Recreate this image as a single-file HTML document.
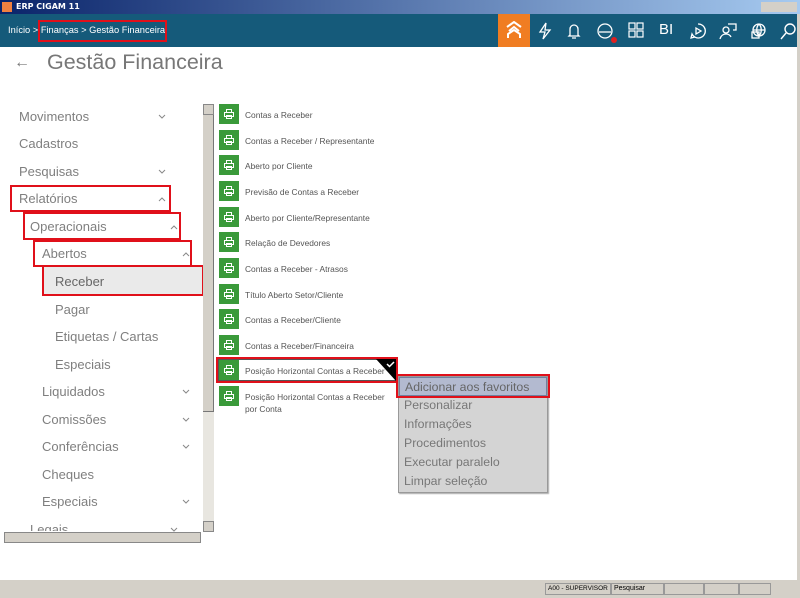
<!DOCTYPE html>
<html><head><meta charset="utf-8"><style>
*{margin:0;padding:0;box-sizing:border-box}
body{width:800px;height:598px;overflow:hidden;background:#d4d0c8;font-family:"Liberation Sans",sans-serif;position:relative}
.abs{position:absolute}
.title{left:0;top:0;width:800px;height:14px;background:linear-gradient(90deg,#0a246a,#a6caf0);color:#fff;font:bold 8px "DejaVu Sans",sans-serif;line-height:14px;padding-left:16px}
.top{left:0;top:14px;width:797px;height:33px;background:#155a7a}
.content{left:0;top:47px;width:797px;height:533px;background:#fff}
.mi{position:absolute;line-height:16px;color:#7f7f7f;font-size:13px;white-space:nowrap}
.chev{position:absolute;width:8px;height:5px}
.red{position:absolute;border:2px solid #e0101a}
.row{position:absolute;left:219px;height:22px}
.ic{position:absolute;left:0;top:0;width:20px;height:20px;background:#3a9a3a}
.ic svg{position:absolute;left:5px;top:5px}
.rt{position:absolute;left:26px;top:5px;font-size:8.4px;color:#555;white-space:nowrap;line-height:12px}
.cm div{height:19px;line-height:19px;padding-left:5px;font-size:12.3px;color:#777}
.ti{position:absolute;top:8px}
</style></head><body>
<div class="abs title"><span class="abs" style="left:2px;top:2px;width:10px;height:10px;background:#f08040"></span>ERP CIGAM 11
<span class="abs" style="left:761px;top:2px;width:36px;height:10px;background:#d4d0c8"></span></div>
<div class="abs top">
<div class="abs" style="left:8px;top:11px;color:#fff;font-size:9.3px;white-space:nowrap">Início &gt; Finanças &gt; Gestão Financeira</div>
<div class="abs" style="left:38px;top:6px;width:129px;height:22px;border:2px solid #e0101a"></div>
<div class="abs" style="left:498px;top:0;width:32px;height:33px;background:#f07d22">
<svg class="abs" style="left:7px;top:7px" width="18" height="18" viewBox="0 0 18 18" fill="none" stroke="#fff" stroke-width="2"><path d="M2 6l7-5 7 5M4 10l5-4 5 4M3 17v-4l6-4 6 4v4"/></svg></div>
<svg class="ti" style="left:537px" width="16" height="18" viewBox="0 0 16 18" fill="none" stroke="#fff" stroke-width="1.3"><path d="M9 1L3 10h5l-2 7 7-9H8z"/></svg>
<svg class="ti" style="left:567px" width="14" height="18" viewBox="0 0 14 18" fill="none" stroke="#fff" stroke-width="1.3"><path d="M3 13V7a4 4 0 018 0v6l1 1H2zM5 16h4"/></svg>
<svg class="ti" style="left:596px" width="18" height="18" viewBox="0 0 18 18" fill="none" stroke="#fff" stroke-width="1.3"><circle cx="9" cy="9" r="7"/><path d="M3 10h12"/></svg>
<span class="abs" style="left:611px;top:23px;width:6px;height:6px;border-radius:3px;background:#e02020"></span>
<svg class="ti" style="left:628px" width="16" height="16" viewBox="0 0 16 16" fill="none" stroke="#fff" stroke-width="1.2"><rect x="1" y="1" width="6" height="6"/><rect x="9" y="1" width="6" height="6"/><rect x="1" y="9" width="6" height="6"/><rect x="9" y="9" width="6" height="6"/></svg>
<div class="abs" style="left:659px;top:7px;color:#fff;font-size:15px">BI</div>
<svg class="ti" style="left:689px" width="18" height="18" viewBox="0 0 18 18" fill="none" stroke="#fff" stroke-width="1.3"><path d="M9 2a7 7 0 11-6 10l-1 4 4-1"/><path d="M7 6l5 3-5 3z"/></svg>
<svg class="ti" style="left:719px" width="18" height="18" viewBox="0 0 18 18" fill="none" stroke="#fff" stroke-width="1.3"><circle cx="7" cy="8" r="3"/><path d="M1 17c1-4 4-5 6-5s4 1 5 3M9 2h8v6h-3"/></svg>
<svg class="ti" style="left:750px" width="18" height="18" viewBox="0 0 18 18" fill="none" stroke="#fff" stroke-width="1.3"><circle cx="9" cy="8" r="6"/><path d="M3 8h12M9 2c-3 3-3 9 0 12M9 2c3 3 3 9 0 12"/><rect x="2" y="10" width="7" height="6"/></svg>
<svg class="ti" style="left:780px" width="17" height="18" viewBox="0 0 17 18" fill="none" stroke="#fff" stroke-width="1.4"><circle cx="10" cy="7" r="5"/><path d="M6 11l-5 6"/></svg>
</div>
<div class="abs content">
<div class="abs" style="left:14px;top:7px;font-size:16px;color:#777">←</div>
<div class="abs" style="left:47px;top:3px;font-size:21.5px;color:#777">Gestão Financeira</div>
</div>
<svg width="0" height="0" style="position:absolute"><defs><path id="dn" d="M1 1l3 3 3-3" fill="none" stroke="#888" stroke-width="1"/><path id="up" d="M1 4l3-3 3 3" fill="none" stroke="#888" stroke-width="1"/></defs></svg>
<div class="mi" style="left:19px;top:109px">Movimentos</div><svg class="chev" style="left:158px;top:114px"><use href="#dn"/></svg>
<div class="mi" style="left:19px;top:136px">Cadastros</div>
<div class="mi" style="left:19px;top:164px">Pesquisas</div><svg class="chev" style="left:158px;top:169px"><use href="#dn"/></svg>
<div class="mi" style="left:19px;top:191px">Relatórios</div><svg class="chev" style="left:158px;top:197px"><use href="#up"/></svg>
<div class="mi" style="left:30px;top:219px">Operacionais</div><svg class="chev" style="left:170px;top:225px"><use href="#up"/></svg>
<div class="mi" style="left:42px;top:246px">Abertos</div><svg class="chev" style="left:182px;top:252px"><use href="#up"/></svg>
<div class="abs" style="left:43px;top:267px;width:160px;height:28px;background:#eaeaea"></div>
<div class="mi" style="left:55px;top:274px;color:#666">Receber</div>
<div class="mi" style="left:55px;top:302px">Pagar</div>
<div class="mi" style="left:55px;top:329px">Etiquetas / Cartas</div>
<div class="mi" style="left:55px;top:357px">Especiais</div>
<div class="mi" style="left:42px;top:384px">Liquidados</div><svg class="chev" style="left:182px;top:389px"><use href="#dn"/></svg>
<div class="mi" style="left:42px;top:412px">Comissões</div><svg class="chev" style="left:182px;top:417px"><use href="#dn"/></svg>
<div class="mi" style="left:42px;top:439px">Conferências</div><svg class="chev" style="left:182px;top:444px"><use href="#dn"/></svg>
<div class="mi" style="left:42px;top:467px">Cheques</div>
<div class="mi" style="left:42px;top:494px">Especiais</div><svg class="chev" style="left:182px;top:499px"><use href="#dn"/></svg>
<div class="mi" style="left:30px;top:522px;height:9px;overflow:hidden">Legais</div><svg class="chev" style="left:170px;top:527px"><use href="#dn"/></svg>
<div class="red" style="left:10px;top:185px;width:161px;height:27px"></div>
<div class="red" style="left:23px;top:212px;width:158px;height:28px"></div>
<div class="red" style="left:33px;top:240px;width:159px;height:27px"></div>
<div class="red" style="left:42px;top:265px;width:162px;height:31px"></div>
<div class="abs" style="left:203px;top:104px;width:11px;height:428px;background:#e8e6e0"></div>
<div class="abs" style="left:203px;top:104px;width:11px;height:11px;background:#d4d0c8;border:1px solid #888"></div>
<div class="abs" style="left:203px;top:115px;width:11px;height:297px;background:#d4d0c8;border-right:1px solid #777;border-bottom:1px solid #777"></div>
<div class="abs" style="left:203px;top:521px;width:11px;height:11px;background:#d4d0c8;border:1px solid #888"></div>
<div class="abs" style="left:4px;top:532px;width:197px;height:11px;background:#d4d0c8;border:1px solid #888"></div>
<svg width="0" height="0" style="position:absolute"><defs><g id="pr" fill="none" stroke="#fff" stroke-width="1"><rect x="2.5" y="0.5" width="5" height="3"/><rect x="0.5" y="3.5" width="9" height="4"/><rect x="2.5" y="6.5" width="5" height="3"/></g></defs></svg>

<div class="row" style="top:104px"><div class="ic"><svg width="10" height="10"><use href="#pr"/></svg></div><div class="rt">Contas a Receber</div></div>
<div class="row" style="top:130px"><div class="ic"><svg width="10" height="10"><use href="#pr"/></svg></div><div class="rt">Contas a Receber / Representante</div></div>
<div class="row" style="top:155px"><div class="ic"><svg width="10" height="10"><use href="#pr"/></svg></div><div class="rt">Aberto por Cliente</div></div>
<div class="row" style="top:181px"><div class="ic"><svg width="10" height="10"><use href="#pr"/></svg></div><div class="rt">Previsão de Contas a Receber</div></div>
<div class="row" style="top:207px"><div class="ic"><svg width="10" height="10"><use href="#pr"/></svg></div><div class="rt">Aberto por Cliente/Representante</div></div>
<div class="row" style="top:232px"><div class="ic"><svg width="10" height="10"><use href="#pr"/></svg></div><div class="rt">Relação de Devedores</div></div>
<div class="row" style="top:258px"><div class="ic"><svg width="10" height="10"><use href="#pr"/></svg></div><div class="rt">Contas a Receber - Atrasos</div></div>
<div class="row" style="top:284px"><div class="ic"><svg width="10" height="10"><use href="#pr"/></svg></div><div class="rt">Título Aberto Setor/Cliente</div></div>
<div class="row" style="top:309px"><div class="ic"><svg width="10" height="10"><use href="#pr"/></svg></div><div class="rt">Contas a Receber/Cliente</div></div>
<div class="row" style="top:335px"><div class="ic"><svg width="10" height="10"><use href="#pr"/></svg></div><div class="rt">Contas a Receber/Financeira</div></div>
<div class="abs" style="left:216px;top:357px;width:182px;height:26px;border:2px solid #e0101a;background:#fff"></div>
<div class="abs" style="left:218px;top:359px;width:178px;height:22px;border:1px solid #555"></div>
<div class="row" style="top:360px"><div class="ic"><svg width="10" height="10"><use href="#pr"/></svg></div><div class="rt">Posição Horizontal Contas a Receber</div></div>
<div class="abs" style="left:376px;top:359px;width:0;height:0;border-top:22px solid #000;border-left:20px solid transparent"></div>
<svg class="abs" style="left:386px;top:361px" width="9" height="7" viewBox="0 0 9 7" fill="none" stroke="#fff" stroke-width="1.5"><path d="M1 3l2.5 2.5L8 1"/></svg>
<div class="row" style="top:386px"><div class="ic"><svg width="10" height="10"><use href="#pr"/></svg></div><div class="rt">Posição Horizontal Contas a Receber<br>por Conta</div></div>

<div class="abs cm" style="left:398px;top:376px;width:150px;height:117px;background:#d4d4d4;border:1px solid #999;box-shadow:1px 1px 1px #aaa">
<div style="background:#b3bad0;color:#666;border:1px solid #7080a0">Adicionar aos favoritos</div>
<div>Personalizar</div><div>Informações</div><div>Procedimentos</div><div>Executar paralelo</div><div>Limpar seleção</div>
</div>
<div class="red" style="left:396px;top:374px;width:154px;height:24px"></div>

<div class="abs" style="left:545px;top:583px;width:66px;height:12px;border:1px solid #999;font-size:6.5px;line-height:10px;padding-left:2px;white-space:nowrap;overflow:hidden">A00 - SUPERVISOR</div>
<div class="abs" style="left:611px;top:583px;width:53px;height:12px;border:1px solid #999;font-size:7px;line-height:10px;padding-left:2px">Pesquisar</div>
<div class="abs" style="left:664px;top:583px;width:40px;height:12px;border:1px solid #999"></div>
<div class="abs" style="left:704px;top:583px;width:35px;height:12px;border:1px solid #999"></div>
<div class="abs" style="left:739px;top:583px;width:32px;height:12px;border:1px solid #999"></div>
</body></html>
